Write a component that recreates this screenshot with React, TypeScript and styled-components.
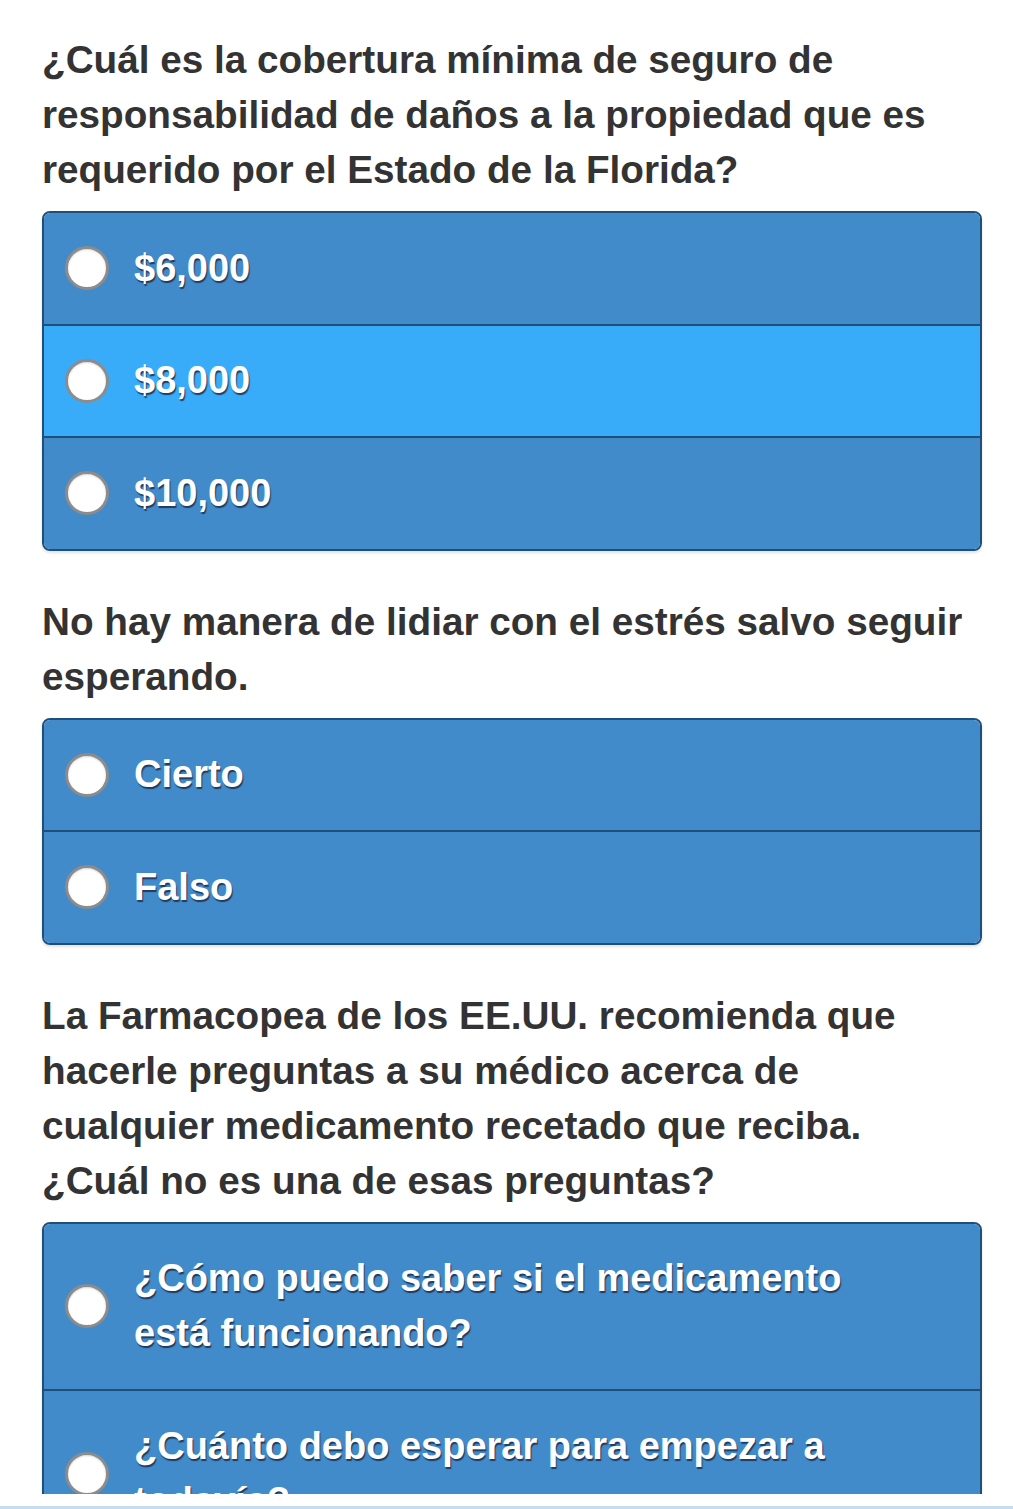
import { useState } from "react";
import styled, { createGlobalStyle } from "styled-components";

const GlobalStyle = createGlobalStyle`
  body {
    margin: 0;
    background-color: #ffffff;
    font-family: "Liberation Sans", Arial, Helvetica, sans-serif;
  }
`;

const Page = styled.div`
  display: flex;
  flex-direction: column;
  height: 1509px;
  overflow: hidden;
`;

const Scroller = styled.div`
  height: 1494px;
  overflow: hidden;
  padding: 32px 31px 0 42px;
  box-sizing: border-box;
`;

const BottomBar = styled.div`
  margin-top: 12px;
  flex: 1;
  border-top: 3px solid #c6ddef;
  background-color: #ffffff;
`;

const Question = styled.h2`
  margin: 0 0 14px;
  font-size: 38.7px;
  line-height: 55px;
  font-weight: bold;
  color: #333333;
  white-space: pre-line;
`;

const Options = styled.ul`
  margin: 0 0 43px;
  padding: 0;
  list-style: none;
  border: 2px solid #1f4e79;
  border-radius: 8px;
  overflow: hidden;
  box-shadow: 0 2px 3px rgba(0, 0, 0, 0.12);
`;

const Option = styled.li<{ $selected: boolean }>`
  display: flex;
  align-items: center;
  gap: 25px;
  padding: 27.75px 20px 27.75px 21px;
  background-color: ${(p) => (p.$selected ? "#38abf9" : "#428bca")};
  cursor: pointer;

  & + & {
    border-top: 2px solid #1f4e79;
  }
`;

const Radio = styled.span`
  flex: none;
  width: 38px;
  height: 38px;
  border-radius: 50%;
  background-color: #ffffff;
  border: 3px solid #8c8c8c;
  box-shadow: inset 0 1px 2px rgba(0, 0, 0, 0.15);
`;

const Label = styled.span`
  font-size: 38px;
  line-height: 55px;
  font-weight: bold;
  color: #ffffff;
  white-space: pre-line;
  text-shadow: 1px 2px 1px rgba(25, 45, 75, 0.85);
`;

interface IQuestion {
  text: string;
  options: string[];
  selected: number;
}

const questions: IQuestion[] = [
  {
    text:
      "¿Cuál es la cobertura mínima de seguro de\nresponsabilidad de daños a la propiedad que es\nrequerido por el Estado de la Florida?",
    options: ["$6,000", "$8,000", "$10,000"],
    selected: 1,
  },
  {
    text: "No hay manera de lidiar con el estrés salvo seguir\nesperando.",
    options: ["Cierto", "Falso"],
    selected: -1,
  },
  {
    text:
      "La Farmacopea de los EE.UU. recomienda que\nhacerle preguntas a su médico acerca de\ncualquier medicamento recetado que reciba.\n¿Cuál no es una de esas preguntas?",
    options: [
      "¿Cómo puedo saber si el medicamento\nestá funcionando?",
      "¿Cuánto debo esperar para empezar a\ntodavía?",
    ],
    selected: -1,
  },
];

const QuestionBlock = ({ q }: { q: IQuestion }) => {
  const [selected, setSelected] = useState(q.selected);
  return (
    <div>
      <Question>{q.text}</Question>
      <Options>
        {q.options.map((opt, i) => (
          <Option key={i} $selected={selected === i} onClick={() => setSelected(i)}>
            <Radio />
            <Label>{opt}</Label>
          </Option>
        ))}
      </Options>
    </div>
  );
};

const App = () => {
  return (
    <Page>
      <GlobalStyle />
      <Scroller>
        {questions.map((q, i) => (
          <QuestionBlock key={i} q={q} />
        ))}
      </Scroller>
      <BottomBar />
    </Page>
  );
};

export default App;
